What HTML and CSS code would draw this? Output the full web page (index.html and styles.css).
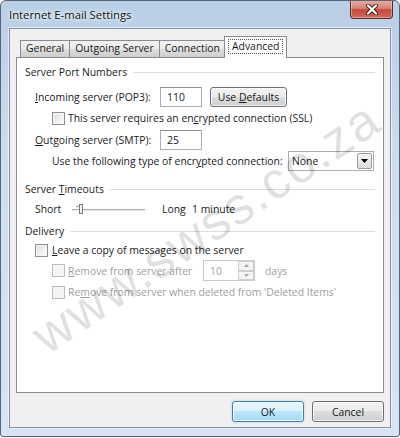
FILE: index.html
```html
<!DOCTYPE html>
<html>
<head>
<meta charset="utf-8">
<link rel="stylesheet" href="styles.css">
</head>
<body>
<div class="window">
  <div class="titlebar">
    <span class="title">Internet E-mail Settings</span>
    <div class="close">
      <svg width="14" height="11" viewBox="0 0 14 11"><path d="M3 1.5 L11 9.5 M11 1.5 L3 9.5" stroke="#4a1c18" stroke-width="4" stroke-linecap="round"/><path d="M3 1.5 L11 9.5 M11 1.5 L3 9.5" stroke="#fff" stroke-width="2.2" stroke-linecap="round"/></svg>
    </div>
  </div>
  <div class="client">
    <div class="tabs">
      <div class="tab">General</div>
      <div class="tab">Outgoing Server</div>
      <div class="tab">Connection</div>
      <div class="tab active"><span class="focus">Advanced</span></div>
    </div>
    <div class="panel">
      <div class="group"><span>Server Port Numbers</span><i class="rule"></i></div>
      <div class="row r-in">
        <span class="lbl"><u>I</u>ncoming server (POP3):</span>
        <span class="box num">110</span>
        <span class="btn small"><span>Use <u>D</u>efaults</span></span>
      </div>
      <div class="row r-ssl">
        <span class="cb"></span>
        <span>This server requires an en<u>c</u>rypted connection (SSL)</span>
      </div>
      <div class="row r-out">
        <span class="lbl"><u>O</u>utgoing server (SMTP):</span>
        <span class="box num">25</span>
      </div>
      <div class="row r-enc">
        <span class="enclbl">Use the following type of encr<u>y</u>pted connection:</span>
        <span class="select"><span>None</span><span class="drop"><svg width="7" height="4" viewBox="0 0 7 4"><path d="M0 0 H7 L3.5 4 Z" fill="#000"/></svg></span></span>
      </div>
      <div class="group g2"><span>Server <u>T</u>imeouts</span><i class="rule"></i></div>
      <div class="row r-slide">
        <span class="short">Short</span>
        <span class="slider">
          <svg width="74" height="12" viewBox="0 0 74 12">
            <rect x="0" y="6" width="73" height="1" fill="#b0b0b0"/>
            <rect x="0" y="7" width="73" height="1" fill="#e8e8e8"/>
            <path d="M4 4 L7 3" stroke="#888" stroke-width="1"/>
            <rect x="7.5" y="1.5" width="3" height="9" fill="#f4f4f4" stroke="#7a7a7a" stroke-width="1"/>
          </svg>
        </span>
        <span class="long">Long</span>
        <span>1 minute</span>
      </div>
      <div class="group g3"><span>Delivery</span><i class="rule"></i></div>
      <div class="row r-leave">
        <span class="cb"></span>
        <span><u>L</u>eave a copy of messages on the server</span>
      </div>
      <div class="row r-after dis">
        <span class="cb off"></span>
        <span class="aftlbl"><u>R</u>emove from server after</span>
        <span class="spin"><span class="spinval">10</span><span class="arrows"><span class="ar"><svg width="5" height="3" viewBox="0 0 5 3"><path d="M0 3 L2.5 0 L5 3 Z" fill="#a8a8a8"/></svg></span><span class="ar"><svg width="5" height="3" viewBox="0 0 5 3"><path d="M0 0 L5 0 L2.5 3 Z" fill="#a8a8a8"/></svg></span></span></span>
        <span class="days">days</span>
      </div>
      <div class="row r-del dis">
        <span class="cb off"></span>
        <span>Re<u>m</u>ove from server when deleted from 'Deleted Items'</span>
      </div>
    </div>
    <div class="buttons">
      <span class="btn ok">OK</span>
      <span class="btn">Cancel</span>
    </div>
  </div>
  <div class="watermark">www.swss.co.za</div>
</div>
</body>
</html>
```
FILE: styles.css
```css
* { box-sizing: border-box; }
html, body { margin: 0; padding: 0; background: #fff; }
body { font-family: "Open Sans", "Noto Sans", sans-serif; font-size: 10.4px; color: #1a1a1a; white-space: nowrap; }
u { text-decoration: underline; text-underline-offset: 1px; }

.window {
  position: relative;
  width: 400px;
  height: 437px;
  display: flex;
  flex-direction: column;
  border: 1px solid #55667a;
  border-radius: 6px 6px 3px 3px;
  background: linear-gradient(180deg, #b9cfe6 0%, #cfdeee 40%, #d7e4f1 100%);
  overflow: hidden;
}
.titlebar {
  height: 27px;
  display: flex;
  align-items: flex-start;
  flex-shrink: 0;
}
.title {
  padding-left: 8px;
  line-height: 28px;
  font-size: 11.3px;
  color: #111;
  text-shadow: 0 0 6px #fff, 0 0 3px #fff;
}
.close {
  margin-left: auto;
  margin-right: 6px;
  width: 43px;
  height: 19px;
  margin-top: -1px;
  border: 1px solid #5a2a26;
  border-top: none;
  border-radius: 0 0 4px 4px;
  background: linear-gradient(180deg, #e8b0a6 0%, #d98276 45%, #c6493c 55%, #d06a58 100%);
  display: flex;
  align-items: center;
  justify-content: center;
  box-shadow: inset 0 0 0 1px rgba(255,255,255,0.35);
}
.client {
  flex: 1;
  margin: 0 8px 8px 8px;
  border: 1px solid #7f90a6;
  background: #f0f0f0;
  display: flex;
  flex-direction: column;
  padding: 7px 6px 0 6px;
  box-shadow: 0 0 0 1px rgba(255,255,255,0.6);
}
.tabs {
  height: 21px;
  display: flex;
  align-items: flex-end;
  padding-left: 4px;
  position: relative;
  z-index: 2;
}
.tab {
  height: 17px;
  padding: 0 5px;
  border: 1px solid #898c95;
  border-bottom: none;
  margin-right: -1px;
  background: linear-gradient(180deg, #f2f2f2 0%, #ebebeb 50%, #dddddd 51%, #cfcfcf 100%);
  line-height: 15px;
  color: #1a1a1a;
}
.tab.active {
  height: 22px;
  margin-bottom: -1px;
  background: #fff;
  padding: 2px 3px 0 3px;
  margin-left: -1px;
}
.tab.active .focus {
  display: block;
  border: 1px dotted #555;
  padding: 0 3px;
  line-height: 13px;
  height: 15px;
}
.panel {
  flex: 1;
  background: #fff;
  border: 1px solid #898c95;
  padding: 6px 8px 0 8px;
  display: flex;
  flex-direction: column;
}
.group {
  height: 16px;
  display: flex;
  align-items: center;
  gap: 6px;
  flex-shrink: 0;
}
.group .rule {
  flex: 1;
  height: 1px;
  background: #d5dfe5;
}
.g2 { margin-top: 10px; }
.g3 { margin-top: 6px; }
.row {
  display: flex;
  align-items: center;
  flex-shrink: 0;
}
.lbl { width: 125px; margin-left: 10px; }
.box {
  height: 20px;
  border: 1px solid #abadb3;
  border-top-color: #8e8f8f;
  background: #fff;
  display: flex;
  align-items: center;
  padding-left: 6px;
}
.num { width: 42px; }
.btn {
  display: flex;
  align-items: center;
  justify-content: center;
  border: 1px solid #707070;
  border-radius: 3px;
  background: linear-gradient(180deg, #f2f2f2 0%, #ebebeb 49%, #dddddd 50%, #cfcfcf 100%);
  box-shadow: inset 0 0 0 1px rgba(255,255,255,0.7);
  color: #1a1a1a;
}
.btn.small { width: 77px; height: 20px; margin-left: 8px; }
.r-in { height: 21px; margin-top: 6px; }
.r-ssl { height: 14px; margin-top: 4px; padding-left: 27px; gap: 3px; }
.r-out { height: 20px; margin-top: 5px; }
.r-enc { height: 20px; margin-top: 1px; }
.enclbl { width: 236px; margin-left: 27px; }
.select {
  width: 86px;
  height: 20px;
  border: 1px solid #abadb3;
  display: flex;
  align-items: center;
  padding-left: 3px;
  justify-content: space-between;
  background: #fff;
}
.drop {
  width: 15px;
  height: 16px;
  margin-right: 1px;
  border: 1px solid #9a9a9a;
  border-radius: 2px;
  background: linear-gradient(180deg, #f6f6f6, #dcdcdc);
  display: flex;
  align-items: center;
  justify-content: center;
}
.cb {
  width: 13px;
  height: 13px;
  border: 1px solid #8e8f8f;
  background: linear-gradient(135deg, #dcdcdc 0%, #f2f2f2 60%, #fff 100%);
  box-shadow: inset 0 0 0 1px #f4f4f4;
  flex-shrink: 0;
}
.cb.off {
  border-color: #bcbcbc;
  background: #f4f4f4;
}
.r-slide { height: 16px; margin-top: 4px; }
.short { margin-left: 10px; width: 37px; }
.slider { width: 90px; display: flex; align-items: center; }
.long { width: 30px; }
.r-leave { height: 14px; margin-top: 4px; padding-left: 10px; gap: 4px; }
.dis { color: #a0a0a0; }
.r-after { height: 21px; margin-top: 3px; padding-left: 27px; }
.aftlbl { margin-left: 3px; width: 135px; }
.spin {
  width: 52px;
  height: 21px;
  border: 1px solid #c9cacc;
  display: flex;
  align-items: center;
  padding-left: 6px;
  justify-content: space-between;
}
.arrows {
  display: flex;
  flex-direction: column;
  width: 16px;
  height: 19px;
}
.ar {
  flex: 1;
  border: 1px solid #cfcfcf;
  background: #f4f4f4;
  display: flex;
  align-items: center;
  justify-content: center;
}
.days { margin-left: 10px; }
.r-del { height: 14px; margin-top: 4px; padding-left: 27px; gap: 3px; }

.buttons {
  height: 34px;
  flex-shrink: 0;
  display: flex;
  justify-content: flex-end;
  align-items: flex-start;
  padding-top: 8px;
  gap: 8px;
}
.buttons .btn { width: 72px; height: 21px; }
.btn.ok {
  border-color: #3c7fb1;
  background: linear-gradient(180deg, #eaf6fd 0%, #d9f0fc 49%, #bee6fd 50%, #a7d9f5 100%);
  box-shadow: inset 0 0 0 1px rgba(255,255,255,0.8), 0 0 2px #7fc4ef;
}
.watermark {
  position: absolute;
  left: 205px;
  top: 226px;
  transform: translate(-50%, -50%) rotate(-34deg);
  font-size: 52px;
  font-family: "Liberation Sans", Arial, sans-serif;
  color: rgba(0,0,0,0.12);
  letter-spacing: 2px;
  white-space: nowrap;
  pointer-events: none;
}
```
